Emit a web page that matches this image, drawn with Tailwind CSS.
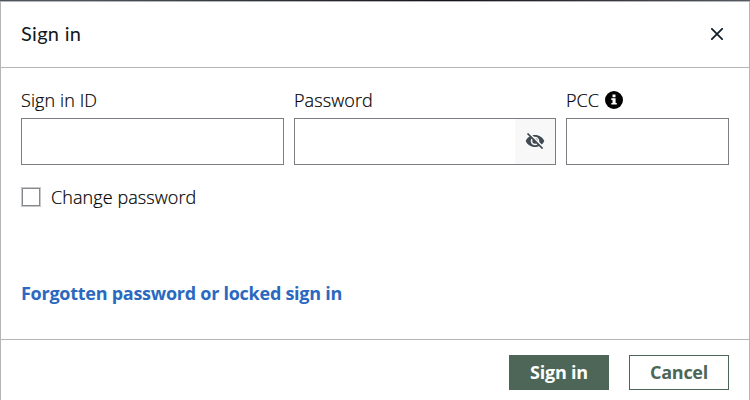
<!DOCTYPE html>
<html lang="en">
<head>
<meta charset="utf-8">
<title>Sign in</title>
<script src="https://cdn.jsdelivr.net/npm/@tailwindcss/browser@4"></script>
</head>
<body class="h-[400px] w-[750px] bg-linear-to-r from-[#4b5560] from-10% via-[#15141c] via-60% to-[#555a66] pt-px font-['Open_Sans',sans-serif] text-[18px] leading-6 font-light text-black">
<main class="flex h-[399px] flex-col border border-b-0 border-[#b5b5b5] bg-white">
  <header class="flex h-[66px] shrink-0 items-center justify-between border-b border-[#b5b5b5] px-5 pb-[2px]">
    <h1 class="pb-[2px] font-['Lato',sans-serif] text-[20px] font-normal tracking-[0.3px] text-[#111820]">Sign in</h1>
    <button type="button" aria-label="Close" class="mr-[6px] flex">
      <svg class="size-3" viewBox="0 0 12 12" fill="none" stroke="#14202a" stroke-width="1.8"><path d="M.2.2 11.8 11.8M11.800.200.200 11.800"/></svg>
    </button>
  </header>
  <form class="flex h-[272px] shrink-0 flex-col border-b border-[#b5b5b5] px-5 pt-5">
    <div class="flex gap-[10px]">
      <label class="w-[263px]"><span class="block h-[30px] tracking-[0.1px] [-webkit-text-stroke:0.2px_#000]">Sign in ID</span>
        <input type="text" class="block h-[47px] w-full border border-[#7c7d82] bg-white">
      </label>
      <label class="w-[262px]"><span class="block h-[30px] tracking-[0.08px] [-webkit-text-stroke:0.2px_#000]">Password</span>
        <span class="flex h-[47px] border border-[#7c7d82] bg-white">
          <input type="password" class="w-[220px]">
          <span class="flex flex-1 items-center justify-center bg-[#f8f8f8] pb-[2px]">
            <svg class="h-4 w-5" viewBox="0 0 20 16"><path fill="#414b53" fill-rule="evenodd" d="M.7 8C2.2 4.4 5.8 2 10 2s7.8 2.400 9.300 6c-1.500 3.600-5.100 6-9.300 6S2.200 11.600.7 8ZM10 3.700a4.300 4.300 0 1 0 0 8.600 4.300 4.300 0 0 0 0-8.600Z"/><circle cx="10" cy="8" r="2.700" fill="#414b53"/><path d="M3.600-.4 18.700 14.700" stroke="#f8f8f8" stroke-width="1.700"/><path d="M2.500.5 17.600 15.600" stroke="#414b53" stroke-width="1.700"/></svg>
          </span>
        </span>
      </label>
      <label class="w-[163px]"><span class="flex h-[30px] items-start gap-[6px] [-webkit-text-stroke:0.2px_#000]">PCC
          <svg class="mt-[3px] size-[18px]" viewBox="0 0 18 18"><circle cx="9" cy="9" r="9" fill="#000"/><path fill="#fff" d="M7.500 3.600h3v2.700h-3zM6.300 7.300h4.300v4.600h1.200v1.700H6.300v-1.700h1.200V9H6.300z"/></svg></span>
        <input type="text" class="block h-[47px] w-full border border-[#7c7d82] bg-white">
      </label>
    </div>
    <label class="mt-5 flex items-center gap-[10px]">
      <input type="checkbox" class="size-5 appearance-none border border-[#c6c8ca] bg-white inset-ring inset-ring-[#85898d]">
      <span class="tracking-[0.08px] [-webkit-text-stroke:0.2px_#000]">Change password</span>
    </label>
    <a href="#" class="mt-[72px] self-start font-bold tracking-[-0.26px] text-[#2a69bf]">Forgotten password or locked sign in</a>
  </form>
  <footer class="flex justify-end gap-5 px-5 pt-[15px]">
    <button type="button" class="h-[35px] w-[100px] bg-[#4d6658] pb-[2px] font-bold tracking-[-0.2px] text-white">Sign in</button>
    <button type="button" class="h-[35px] w-[100px] border border-[#4d6658] bg-white pb-[2px] font-bold tracking-[-0.3px] text-[#4d6658]">Cancel</button>
  </footer>
</main>
</body>
</html>
